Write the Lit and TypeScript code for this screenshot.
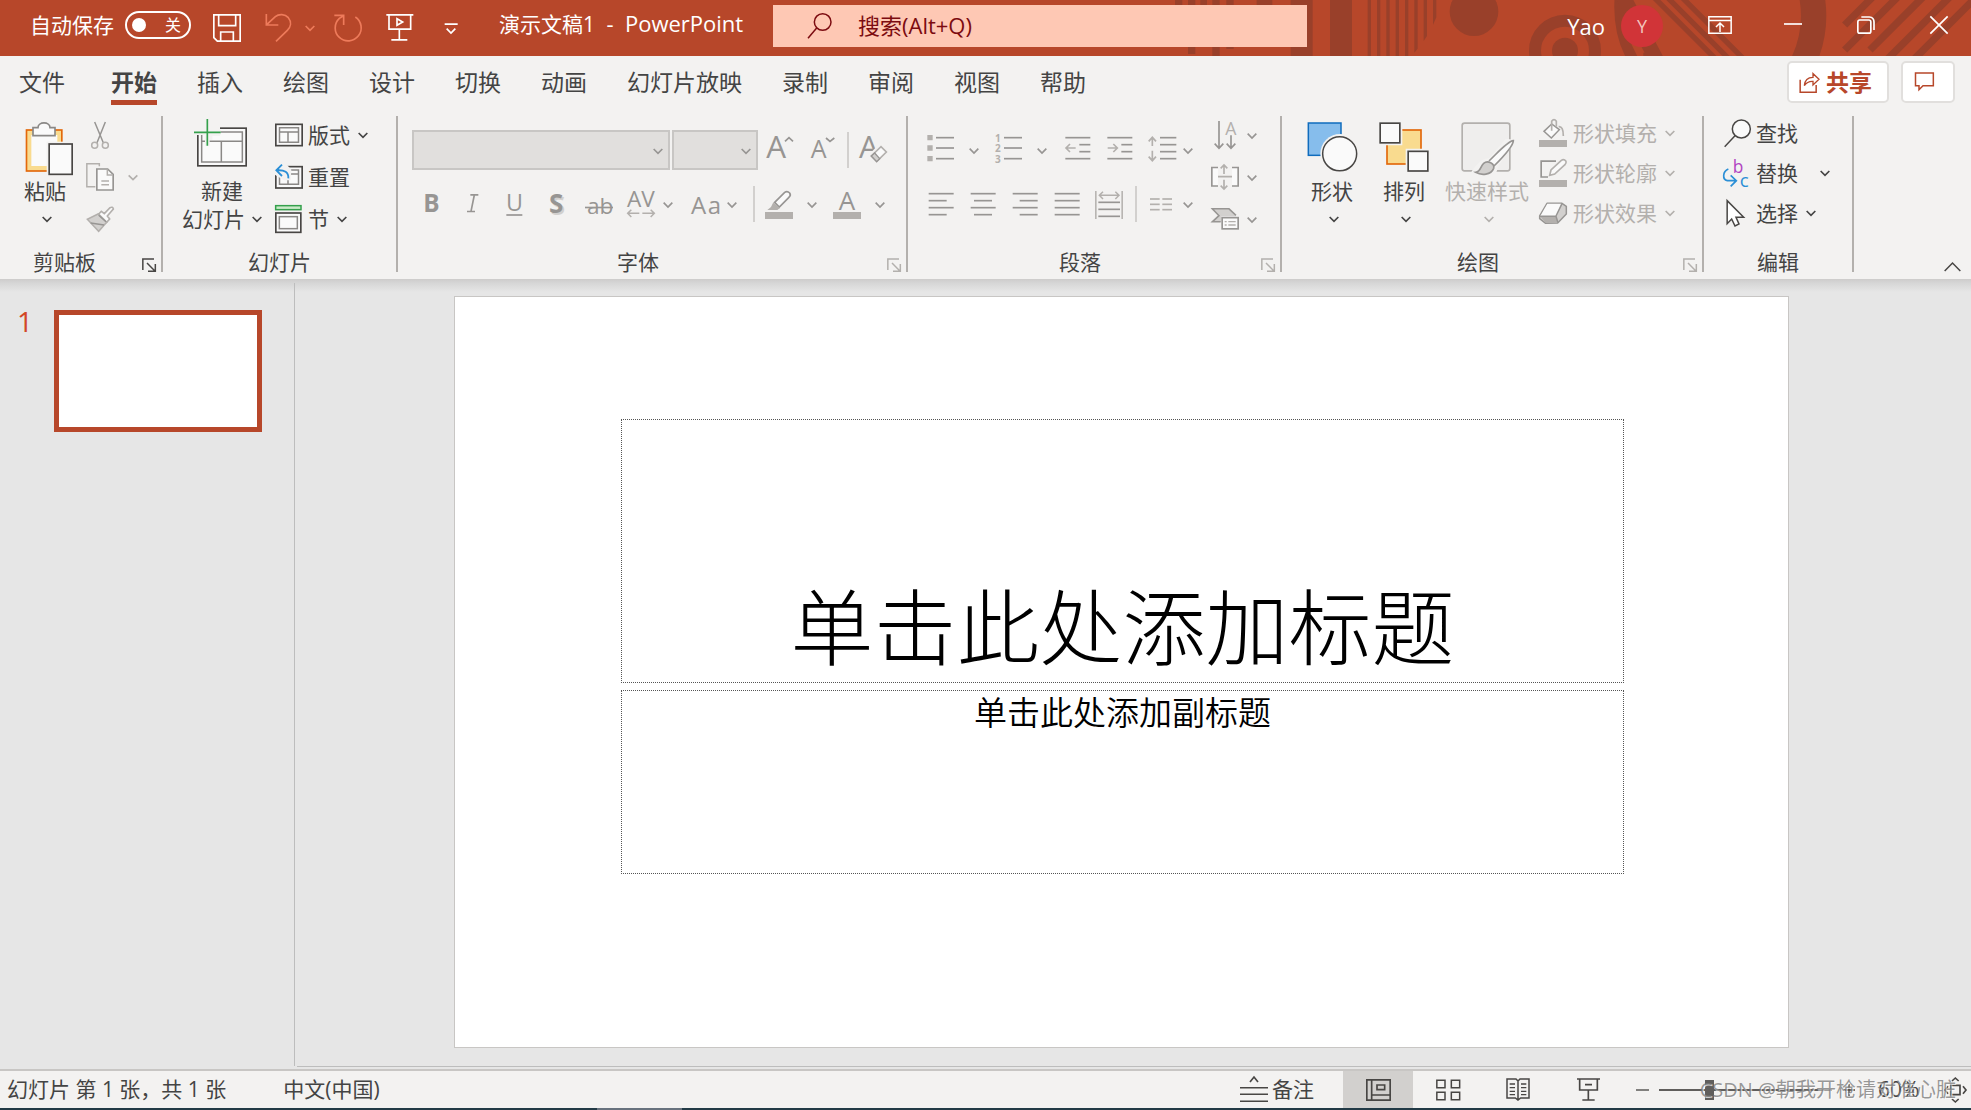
import { LitElement, html, css, svg, nothing } from "lit";
import type { TemplateResult } from "lit";
import { customElement, state } from "lit/decorators.js";

type Art = TemplateResult;

/* Icon art is drawn on a grid three times finer than the displayed pixels. */
const icon = (x: number, y: number, w: number, h: number, body: unknown) => html`<svg
  class="ic" aria-hidden="true" width=${w / 3} height=${h / 3} viewBox="${x} ${y} ${w} ${h}" fill="none">${body}</svg>`;

const chevron = (dy = 0, h = 36) => icon(-15, -h / 2 - dy, 30, h,
  svg`<path d="M-13 -6L0 7L13 -6" stroke="currentColor" stroke-width="5"/>`);

const glyph = (x: number, y: number, size: number, text: string, extra = "") =>
  svg`<text class=${"glyph " + extra} x=${x} y=${y} font-size=${size}>${text}</text>`;

const G = "#979593"; // disabled stroke, dark
const L = "#b3b0ad"; // disabled stroke, light
const D = "#484644"; // enabled stroke
const BG = "#f3f2f1";

const lines = (rows: [number, number, number][], color = G) =>
  svg`${rows.map(([x1, x2, y]) => svg`<path d="M${x1} ${y}H${x2}" stroke=${color} stroke-width="5"/>`)}`;

const icons = {
  save: () => icon(639, 42, 84, 84, svg`<path d="M641.500 44.500H720.500V123.500H652L641.500 113Z M656 46V77H707V46 M662 122V96H700V122" stroke="#fff" stroke-width="5"/>`),
  undo: () => icon(796, 42, 84, 84, svg`<path d="M800 42V75H836 M801 74L827 50C838 41 856 42 866 53C877 66 873 81 863 91L829 124" stroke="#ee7b5b" stroke-width="5"/>`),
  redo: () => icon(1002, 42, 84, 84, svg`<path d="M1003 46H1031V75 M1031 47L1018 55A39 39 0 1 0 1066 51" stroke="#ee7b5b" stroke-width="5"/>`),
  present: () => icon(1157, 42, 84, 84, svg`<path d="M1158 44.500H1239 M1166 45V87.500H1231V45 M1197 88V118 M1173 119.500H1221" stroke="#fff" stroke-width="5"/><path d="M1190 56V76L1207 66Z" stroke="#fff" stroke-width="5"/>`),
  customize: () => icon(1333, 54, 42, 48, svg`<path d="M1335 66.500H1374 M1341 80L1354 93L1367 80" stroke="#fff" stroke-width="5"/>`),
  searchTitle: () => icon(1072, 36, 78, 84, svg`<circle cx="1119" cy="66" r="25" stroke="#7c0b10" stroke-width="4.500"/><path d="M1101 84L1075 115" stroke="#7c0b10" stroke-width="4.500"/>`),
  ribbonMode: () => icon(771, 48, 72, 54, svg`<path d="M773.500 50.500H840.500V99.500H773.500Z M773 61.500H841 M807 96V70 M795 81L807 69L819 81" stroke="#fff" stroke-width="4.500"/>`),
  minimize: () => icon(1002, 48, 54, 54, svg`<path d="M1002 72H1056" stroke="#fff" stroke-width="5"/>`),
  restore: () => icon(1220, 48, 54, 54, svg`<rect x="1222.500" y="60" width="39" height="39.500" rx="6" stroke="#fff" stroke-width="5"/><path d="M1233 51H1257Q1271 52 1271 66V90" stroke="#fff" stroke-width="5"/>`),
  close: () => icon(1440, 48, 54, 54, svg`<path d="M1441 49L1493 101M1493 49L1441 101" stroke="#fff" stroke-width="5"/>`),
  share: () => icon(1048, 210, 63, 69, svg`<path d="M1051.500 236V273.500H1099.500V252" stroke="#b7472a" stroke-width="4.500"/><path d="M1064 254Q1066 229 1090 229V218L1108 235L1090 252V241Q1073 240 1064 254Z" stroke="#b7472a" stroke-width="4"/>`),
  comment: () => icon(1392, 212, 63, 63, svg`<path d="M1396.500 218H1450V256H1419L1407 268V256H1396.500Z" stroke="#b7472a" stroke-width="4.500"/>`),

  paste: () => icon(45, 18, 180, 180, svg`<rect x="79.500" y="60" width="106" height="123" fill="#f9db8f" stroke="#e3690b" stroke-width="5"/><rect x="94" y="75" width="78" height="93" fill="#fafafa"/><path d="M99 77V53H114C114 34 150 34 150 53H165V77Z" fill="#fafafa" stroke="#8a8886" stroke-width="5"/><rect x="140" y="95" width="84" height="103" fill=${BG}/><rect x="147.500" y="102" width="69" height="91" fill="#fafafa" stroke=${D} stroke-width="5"/>`),
  cut: () => icon(258, 33, 84, 84, svg`<path d="M284 36L310 98M316 36L291 98" stroke=${G} stroke-width="4.500"/><circle cx="284" cy="106" r="9" stroke=${L} stroke-width="4.500"/><circle cx="316" cy="106" r="9" stroke=${L} stroke-width="4.500"/>`),
  copy: () => icon(258, 159, 84, 84, svg`<path d="M298 169V161H260.500V230H286" stroke=${L} stroke-width="4.500"/><path d="M290.500 177H323L339.500 193V240H290.500Z" fill="#fafafa" stroke=${G} stroke-width="5"/><path d="M322 178V195H339 M304 213H327M304 224H327" stroke=${L} stroke-width="4.500"/>`),
  brush: () => icon(258, 282, 84, 84, svg`<path d="M296 309L304 301L313 308L330 290Q338 286 340 294L322 315L329 324L320 334L294 308Z" fill="#fafafa" stroke=${L} stroke-width="5"/><path d="M294 309L262 325L296 361L320 334Z" fill="#d2d0ce" stroke=${L} stroke-width="4.500"/><path d="M272 336L312 342M296 313L318 332" stroke=${G} stroke-width="4"/>`),
  newSlide: () => icon(579, 18, 180, 180, svg`<rect x="596.500" y="54.500" width="145" height="113" fill="#fafafa" stroke=${D} stroke-width="5"/><rect x="608" y="66" width="122" height="90" stroke="#8a8886" stroke-width="4.500"/><path d="M608 94H730M667 94V156" stroke="#8a8886" stroke-width="4.500"/><path d="M590 48H663V78H640V90H617V75H590Z" fill=${BG}/><path d="M625 27V107M585 67H665" stroke=${BG} stroke-width="14"/><path d="M625 27V107M585 67H665" stroke="#34a04c" stroke-width="5"/>`),
  layout: () => icon(825, 33, 84, 78, svg`<rect x="827.500" y="40" width="79" height="64" fill="#fafafa" stroke=${D} stroke-width="5"/><path d="M838.500 50.500H895.500V93.500H838.500ZM838 63H896M864 63V93" stroke="#8a8886" stroke-width="4.500"/>`),
  reset: () => icon(825, 159, 84, 78, svg`<rect x="827.500" y="167" width="79" height="64" fill="#fafafa" stroke=${D} stroke-width="5"/><path d="M838.500 177H895.500V219.500H838.500ZM862 189H896M864 202V219" stroke="#8a8886" stroke-width="4.500"/><path d="M822 158H858L874 176L872 208H852L822 190Z" fill=${BG}/><path d="M846 161L829 178L846 195M830 178C854 176 866 184 865 202" stroke="#2b8fd6" stroke-width="5.500"/>`),
  section: () => icon(825, 285, 84, 84, svg`<rect x="827" y="287" width="76" height="12" fill="#caeac8" stroke="#34a04c" stroke-width="4.500"/><rect x="827.500" y="309" width="75" height="58" fill="#fafafa" stroke=${D} stroke-width="5"/><rect x="838" y="320" width="54" height="36" stroke="#8a8886" stroke-width="4.500"/>`),
  launcher: (c: string) => icon(426, 444, 42, 42, svg`<path d="M428.500 480V447H462M441 459L464 482M466 462V483.500H444" stroke=${c} stroke-width="4.500"/>`),

  grow: () => icon(1125, 78, 84, 84, svg`${glyph(1129, 144, 94, "A")}<path d="M1185 94L1197 83L1209 94" stroke=${G} stroke-width="5"/>`),
  shrink: () => icon(1252, 78, 84, 84, svg`${glyph(1263, 144, 75, "A")}<path d="M1309 84L1321 94L1334 84" stroke=${G} stroke-width="5"/>`),
  clear: () => icon(1406, 78, 84, 84, svg`${glyph(1406, 144, 94, "A")}<path d="M1432 138L1470 98L1500 130L1470 168Z" fill=${BG}/><path d="M1443 138L1472 110L1488 126L1459 155Z" fill="#fafafa" stroke=${L} stroke-width="5"/><path d="M1443 138L1453 129L1468 146L1459 155Z" fill="#d2d0ce" stroke=${G} stroke-width="4"/>`),
  bold: () => icon(84, 240, 84, 84, glyph(103, 305, 73, "B", "bold")),
  italic: () => icon(208, 240, 84, 84, svg`<path d="M242 254.500H266M232 304.500H256M254 255L244 304" stroke=${G} stroke-width="5"/>`),
  underline: () => icon(332, 240, 84, 84, svg`${glyph(347, 304, 70, "U")}<path d="M348 315H396" stroke=${G} stroke-width="5"/>`),
  shadow: () => icon(459, 240, 84, 84, svg`${glyph(482, 316, 78, "S", "bold pale")}${glyph(477, 310, 78, "S", "bold")}`),
  strike: () => icon(585, 240, 84, 84, svg`${glyph(591, 312, 68, "ab")}<path d="M585 292.500H669" stroke=${G} stroke-width="5"/>`),
  spacing: () => icon(711, 240, 84, 84, svg`${glyph(711, 291, 68, "AV")}<path d="M748 310H713M724 299L713 310L724 321M757 310H793M782 299L793 310L782 321" stroke=${L} stroke-width="4.500"/>`),
  changeCase: () => icon(905, 240, 84, 84, svg`${glyph(905, 312, 72, "A")}${glyph(955, 312, 72, "a")}`),
  highlight: () => icon(1125, 240, 84, 87, svg`<rect x="1125" y="306" width="84" height="21" fill=${L}/><path d="M1154 277L1184 247Q1192 242 1199 249Q1204 256 1196 263L1168 291Z" fill="#fafafa" stroke=${G} stroke-width="5"/><path d="M1150 277L1170 294L1162 300H1132L1143 291Z" fill=${L}/>`),
  fontColor: () => icon(1329, 240, 84, 87, svg`<rect x="1329" y="306" width="84" height="21" fill=${L}/>${glyph(1346, 299, 78, "A")}`),

  bullets: () => icon(80, 78, 84, 84, svg`<path d="M81 75H97V91H81ZM81 106H97V122H81ZM81 138H97V154H81Z" fill=${L}/>${lines([[107, 161, 83], [107, 161, 114], [107, 161, 146]])}`),
  numbers: () => icon(284, 72, 84, 96, svg`${glyph(284, 95, 30, "1", "bold light")}${glyph(284, 127, 30, "2", "bold light")}${glyph(284, 158, 30, "3", "bold light")}${lines([[311, 365, 83], [311, 365, 114], [311, 365, 146]])}`),
  outdent: () => icon(490, 78, 84, 84, svg`${lines([[497, 572, 83], [539, 572, 104], [539, 572, 125], [497, 572, 146]])}<path d="M528 114H500M511 102L499 114L511 126" stroke=${L} stroke-width="5"/>`),
  indent: () => icon(616, 78, 84, 84, svg`${lines([[623, 698, 83], [665, 698, 104], [665, 698, 125], [623, 698, 146]])}<path d="M624 114H652M641 102L653 114L641 126" stroke=${L} stroke-width="5"/>`),
  leading: () => icon(744, 78, 84, 84, svg`${lines([[783, 832, 83], [783, 832, 104], [783, 832, 125], [783, 832, 146]])}<path d="M760 83V108M749 94L760 82L771 94M760 122V150M749 140L760 152L771 140" stroke=${L} stroke-width="5"/>`),
  left: () => icon(81, 240, 84, 84, lines([[86, 161, 251], [86, 140, 272], [86, 161, 293], [86, 140, 314]])),
  center: () => icon(207, 240, 84, 84, lines([[212, 287, 251], [222, 276, 272], [212, 287, 293], [222, 276, 314]])),
  right: () => icon(333, 240, 84, 84, lines([[338, 413, 251], [359, 413, 272], [338, 413, 293], [359, 413, 314]])),
  justify: () => icon(459, 240, 84, 84, lines([[464, 539, 251], [464, 539, 272], [464, 539, 293], [464, 539, 314]])),
  distribute: () => icon(585, 240, 84, 87, svg`${lines([[595, 660, 277], [595, 660, 298], [595, 660, 319]])}<path d="M587.500 243V327M666.500 243V327M599 256H656M609 245L598 256L609 267M646 245L657 256L646 267" stroke=${L} stroke-width="4.500"/>`),
  columns: () => icon(741, 240, 84, 84, lines([[750, 779, 267], [750, 779, 283], [750, 779, 299], [787, 816, 267], [787, 816, 283], [787, 816, 299]], L)),
  direction: () => icon(933, 33, 84, 84, svg`<path d="M957 33V112M944 101L957 115L970 101M993 76V112M980 101L993 115L1006 101" stroke=${G} stroke-width="5"/>${glyph(976, 74, 53, "A", "light")}`),
  valign: () => icon(933, 157, 84, 84, svg`<path d="M954 170.500H935.500V226H954M996 170.500H1014.500V226H996" fill="#fafafa" stroke=${G} stroke-width="5"/><path d="M954 198H996M972 190V164M962 173L972 163L982 173M972 207V234M962 225L972 235L982 225" stroke=${L} stroke-width="5"/>`),
  smartArt: () => icon(933, 285, 84, 84, svg`<path d="M933 296.500H987L1008 319H964V336H933L955 316Z" fill="#d2d0ce"/><path d="M1008 316L987 296.500H937L957 317L937 335.500H962" stroke=${G} stroke-width="4.500"/><rect x="966.500" y="323" width="48" height="33.500" fill="#fafafa" stroke=${G} stroke-width="5"/><path d="M974 335H980M985 335H1007M974 345H980M985 345H1007" stroke=${L} stroke-width="4"/>`),

  shapes: () => icon(64, 18, 180, 180, svg`<rect x="83" y="39" width="98" height="97" fill="#86bdec" stroke="#0f6cbd" stroke-width="4.500"/><circle cx="178" cy="131" r="59" fill=${BG}/><circle cx="177" cy="131.500" r="51" fill="#fafafa" stroke=${D} stroke-width="4.500"/>`),
  arrange: () => icon(282, 18, 180, 180, svg`<rect x="321" y="60" width="102" height="102" fill="#f9db8f" stroke="#e3690b" stroke-width="5"/><path d="M292 32H367V106H292ZM377 116H452V190H377Z" fill=${BG}/><rect x="300.500" y="39.500" width="59" height="59" fill="#fafafa" stroke=${D} stroke-width="5"/><rect x="384.500" y="124" width="59" height="59" fill="#fafafa" stroke=${D} stroke-width="5"/>`),
  quickStyle: () => icon(534, 18, 180, 180, svg`<rect x="549.500" y="39.500" width="143" height="143" rx="7" fill="#efeeed" stroke=${L} stroke-width="5"/><path d="M575 190Q600 145 630 145L680 86L712 90L660 165L648 198H585Z" fill=${BG}/><path d="M630 153C660 124 686 94 703 92C703 108 675 138 645 168" fill="#fafafa" stroke=${G} stroke-width="5"/><path d="M590 187C606 185 604 168 614 160C626 150 648 160 644 175C636 195 608 197 590 187Z" fill="#d2d0ce" stroke=${G} stroke-width="5"/>`),
  fill: () => icon(780, 27, 84, 84, svg`<rect x="777" y="90" width="84" height="21" fill=${L}/><path d="M815 42L792 64L814 84L838 59Z" fill="#fafafa" stroke=${G} stroke-width="4.500"/><path d="M815 62V34Q822 24 829 34V50M836 50Q850 48 850 78" stroke=${L} stroke-width="5"/>`),
  outline: () => icon(780, 147, 84, 84, svg`<rect x="777" y="210" width="84" height="21" fill=${L}/><path d="M828 153.500H783.500V201H804" stroke=${G} stroke-width="5"/><path d="M809 196L813 180L844 151Q852 146 858 154Q860 160 854 165L824 192Z" fill="#fafafa" stroke=${L} stroke-width="5"/>`),
  effects: () => icon(780, 267, 84, 84, svg`<path d="M779 318L801 280H846L859 289V312L833 339L797 340L779 326Z" fill="#d2d0ce" stroke=${G} stroke-width="4.500" stroke-linejoin="round"/><path d="M781 318L802 281H844L828 318Z" fill="#fafafa"/><path d="M780 319H828L834 338L798 339Z" fill="#b3b0ad"/><path d="M779 319H828L834 338M828 318L846 281" stroke=${G} stroke-width="4.500"/>`),
  find: () => icon(129, 25, 84, 84, svg`<circle cx="184" cy="55" r="27" fill="#fafafa" stroke=${D} stroke-width="4.500"/><path d="M165 75L134 108" stroke=${D} stroke-width="4.500"/>`),
  replace: () => icon(129, 147, 84, 84, svg`<text class="glyph violet" x="158" y="188" font-size="52">b</text><text class="glyph blue" x="179" y="230" font-size="56">c</text><path d="M145 177C128 184 126 208 142 212H169M152 196L169 212L152 229" stroke="#2b8fd6" stroke-width="5"/>`),
  select: () => icon(129, 267, 84, 84, svg`<path d="M141.500 272V341L155 327L165 348L177 342L168 322H191Z" fill="#fff" stroke=${D} stroke-width="4.500"/>`),
  collapse: () => icon(792, 456, 51, 33, svg`<path d="M794 486L817.500 462L841 486" stroke=${D} stroke-width="4.500"/>`),

  notes: () => icon(0, 0, 84, 81, svg`<path d="M0 35H84M0 55H84M0 76H84" stroke=${D} stroke-width="4.500"/><path d="M30 18L42 3L54 18" stroke=${D} stroke-width="5"/>`),
  normal: () => icon(0, 0, 75, 66, svg`<path d="M2.500 2.500H72.500V63.500H2.500ZM17 3V63M17 48H72M33 18H56V32H33Z" stroke=${D} stroke-width="5"/>`),
  sorter: () => icon(0, 0, 75, 66, svg`<path d="M2.500 4H27V26H2.500ZM46 4H71V26H46ZM2.500 40H27V62H2.500ZM46 40H71V62H46Z" stroke=${D} stroke-width="4.500"/>`),
  reading: () => icon(0, 0, 72, 69, svg`<path d="M3 3H30L36 9L42 3H69V60H44L36 66L28 60H3ZM36 9V64" stroke=${D} stroke-width="4.500"/><path d="M11 18H27M11 29H27M11 40H27M11 50H27M45 18H61M45 29H61M45 40H61M45 50H61" stroke=${D} stroke-width="4"/>`),
  slideshow: () => icon(0, 0, 69, 69, svg`<path d="M0 3H69M8 3V36H61V3M34 37V65M16 66H53M24 20H45" stroke=${D} stroke-width="5"/>`),
  fit: () => icon(0, 0, 69, 78, svg`<path d="M21 25H48V53H21ZM24 12L34 3L44 12M24 66L34 75L44 66M12 28L3 39L12 50M57 28L66 39L57 50" stroke=${D} stroke-width="5"/>`),
};

const P = "#99402a";
const titlePattern = svg`
  <g fill=${P}>
    <path d="M675 0H697V15H675ZM714 0H736V162H714ZM751 0H771V15H751ZM787 0H809V168H787ZM829 0H851V147H829Z"/>
    <path d="M920 0H967V15H920ZM1022 0H1088V168H1022ZM1140 0H1206V168H1140Z"/>
    <path d="M1253 0H1263V168H1253ZM1281 0H1291V168H1281ZM1309 0H1319V168H1309ZM1337 0H1347V168H1337ZM1365 0H1375V168H1365Z"/>
    <path d="M1393 0H1403V146L1393 158ZM1421 0H1431V108L1421 123ZM1449 0H1459V52L1449 75Z"/>
    <circle cx="1572" cy="35" r="73"/>
    <circle cx="1845" cy="152" r="39"/>
  </g>
  <g fill="none" stroke=${P}>
    <circle cx="1845" cy="152" r="90" stroke-width="36"/>
    <path d="M2010 -10Q2002 100 2050 180" stroke-width="32"/>
    <path d="M2020 -10L2120 180L2080 180" stroke-width="44"/>
    <path d="M2100 -20L2300 180M2140 -20L2340 180M2184 -20L2384 180" stroke-width="16"/>
    <path d="M2584 -20Q2606 90 2558 190" stroke-width="76"/>
    <path d="M2684 75L2784 -25M2684 150L2859 -25M2760 150L2935 -25M2800 190L3015 -25M2880 190L3090 -20" stroke-width="22"/>
  </g>`;

const TABS = ["文件", "开始", "插入", "绘图", "设计", "切换", "动画", "幻灯片放映", "录制", "审阅", "视图", "帮助"];

@customElement("app-root")
export class AppRoot extends LitElement {
  @state() private tab = "开始";
  @state() private view = "普通视图";

  static styles = css`
    :host {
      display: flex; flex-direction: column; height: 100vh; overflow: hidden; position: relative;
      background: #e6e6e6; color: #444;
      font: 21px/28px "Open Sans", "Noto Sans CJK SC", sans-serif;
    }
    * { box-sizing: border-box; }
    button, input, select { font: inherit; color: inherit; background: none; border: 0; padding: 0; margin: 0; border-radius: 0; }
    button { display: flex; align-items: center; white-space: nowrap; }
    .ic { display: block; flex: none; overflow: visible; }
    .glyph { fill: #979593; font-family: "Open Sans", sans-serif; }
    .glyph.bold { font-weight: 700; }
    .glyph.pale { fill: #d2d0ce; }
    .glyph.light { fill: #b3b0ad; }
    .glyph.violet { fill: #b146c2; }
    .glyph.blue { fill: #2b8fd6; }

    .titlebar { position: relative; display: flex; align-items: center; height: 56px; flex: none; background: #b7472a; color: #fff; }
    .pattern { position: absolute; right: 0; top: 0; }
    .quick { position: relative; display: flex; align-items: center; width: 499px; padding: 0 0 6px 30px; height: 56px; }
    .autosave { display: flex; align-items: center; gap: 11px; margin-right: 22px; }
    .pill { display: flex; align-items: center; justify-content: space-between; width: 66px; height: 28px; border: 2px solid #fff; border-radius: 14px; padding: 0 8px 0 5px; font-size: 16px; line-height: 24px; }
    .pill input { appearance: none; width: 14px; height: 14px; border-radius: 7px; background: #fff; }
    .quick button { margin-top: 6px; }
    .save { margin-right: 24px; }
    .undo { gap: 12px; color: #ee7b5b; margin-right: 19px; }
    .redo, .present { margin-right: 24px; }
    .customize { margin-left: 6px; }
    .doc { position: relative; width: 274px; white-space: pre; padding-bottom: 10px; }
    .latin { font-size: 22px; }
    .search { position: relative; display: flex; align-items: center; flex: 0 1 534px; height: 42px; margin-bottom: 4px; padding-left: 34px; gap: 25px; background: #fec8b4; }
    .search input { flex: 1; min-width: 0; height: 36px; margin-bottom: 2px; outline: 0; color: #7c0b10; font-size: 22px; }
    .search input::placeholder { color: #7c0b10; opacity: 1; }
    .account { position: relative; display: flex; align-items: center; gap: 16px; margin: 0 25px 4px auto; font-size: 22px; }
    .avatar { width: 42px; height: 42px; border-radius: 21px; background: #d13438; display: grid; place-items: center; font-size: 18px; color: #f3c4bd; }
    .window { position: relative; display: flex; gap: 9px; margin-bottom: 6px; }
    .window button { width: 64px; height: 42px; justify-content: center; }

    .tabs { display: flex; flex: none; height: 54px; background: #f3f2f1; font-size: 23px; padding-right: 16px; }
    .tab { height: 49px; padding: 0 20px; color: #444; text-decoration: none; line-height: 53px; white-space: nowrap; }
    .tab:first-child { padding: 0 26px 0 19px; }
    .tab.on { font-weight: 700; padding: 0; margin: 0 20px; border-bottom: 5px solid #b7472a; }
    .tabtools { display: flex; gap: 12px; margin: 5px 0 0 auto; }
    .tabtools button { height: 42px; border: 2px solid #e1dfdd; border-radius: 5px; background: #fff; color: #b7472a; font-weight: 700; }
    .share { width: 102px; padding-left: 10px; gap: 6px; }
    .comment { width: 54px; padding-left: 11px; padding-bottom: 2px; }

    .ribbon { display: flex; flex: none; background: #f3f2f1; padding: 6px 10px 7px 0; }
    .group { display: flex; flex-direction: column; flex: none; height: 156px; border-right: 2px solid #b3b0ad; }
    .body { display: flex; height: 134px; }
    .foot { display: flex; height: 22px; line-height: 24px; align-items: flex-start; }
    .foot span { flex: 1; text-align: center; }
    .foot button { width: 28px; height: 22px; padding-left: 9px; align-items: flex-end; }
    .clipboard { width: 163px; }
    .clipboard .body { padding-left: 12px; gap: 8px; }
    .clipboard .foot span { padding-right: 4px; }
    .slides { width: 235px; }
    .slides .body { padding-left: 15px; gap: 9px; }
    .font { width: 510px; }
    .paragraph { width: 374px; }
    .font .body, .paragraph .body { padding-left: 12px; }
    .drawing { width: 422px; }
    .drawing .body { padding-left: 14px; }
    .editing { width: 150px; }
    .editing .body { padding-left: 19px; }
    .big { flex-direction: column; width: 66px; line-height: 30px; }
    .big.mid { width: 72px; }
    .big.wide { width: 88px; }
    .big.wider { width: 94px; }
    .line2 { display: flex; align-items: center; height: 26px; gap: 7px; }
    .line2.bare { padding-left: 4px; }
    .off { color: #b3b0ad; }
    .stack { display: flex; flex-direction: column; gap: 4px; }
    .stack button { height: 38px; }
    .stack.tight button { height: 36px; padding-bottom: 2px; }
    .stack.shapefmt { padding-left: 6px; }
    .label { padding-left: 5px; }
    .stack .spread { gap: 14px; }
    .near { padding-left: 8px; }
    .far { padding-left: 22px; }
    .rows { display: flex; flex-direction: column; gap: 14px; padding-top: 14px; }
    .row { display: flex; height: 40px; color: #979593; }
    .paragraph .rows { width: 284px; }
    .cell { width: 42px; height: 40px; justify-content: center; }
    .split { height: 40px; width: 64px; padding-left: 7px; gap: 8px; }
    .split.long { width: 68px; gap: 14px; }
    .stack .split { height: 38px; color: #979593; }
    .rule { width: 2px; height: 36px; margin: 2px 3px 2px 5px; background: #d2d0ce; }
    .combos { display: flex; gap: 2px; padding-left: 2px; }
    .combo { position: relative; display: block; width: 258px; }
    .combo.size { width: 86px; }
    .combo select { appearance: none; width: 100%; height: 40px; background: #e1dfdd; border: 2px solid #c8c6c4; opacity: 1; }
    .combo .ic { position: absolute; right: 7px; top: 16px; }
    .collapse { margin-left: auto; align-self: flex-end; }

    .main { display: flex; flex: 1; min-height: 0; background: linear-gradient(#cdcccb, #d6d6d6 4px, #e6e6e6 13px); }
    .panel { width: 295px; flex: none; margin: 4px 0 3px; border-right: 1px solid #bdbdbd; padding: 27px 32px 0 17px; display: flex; align-items: flex-start; color: #d24726; font-size: 28px; line-height: 22px; }
    .panel span { width: 37px; }
    .thumb { flex: 1; aspect-ratio: 208 / 122; background: #fff; border: 5px solid #b7472a; }
    .editor { flex: 1; min-width: 0; margin: 0 0 2px 2px; padding: 17px 25px 18px 0; border-bottom: 1px solid #bdbdbd; display: flex; justify-content: center; }
    .slide { height: 100%; aspect-ratio: 1335 / 752; background: #fff; border: 1px solid #c8c6c4; color: #000; display: grid;
      grid-template-columns: minmax(0, 166fr) minmax(0, 1004fr) minmax(0, 164fr);
      grid-template-rows: minmax(0, 122fr) minmax(0, 264fr) minmax(0, 7fr) minmax(0, 184fr) minmax(0, 173fr); }
    .holder { grid-column: 2; border: 1px dotted #555; text-align: center; margin: 0; display: flex; justify-content: center; }
    .heading { grid-row: 2; align-items: flex-end; padding-bottom: 5px; font-size: 83px; line-height: 108px; font-weight: 300; font-family: "Noto Sans CJK SC Light", "Noto Sans CJK SC", sans-serif; }
    .sub { grid-row: 4; font-size: 33px; line-height: 44px; font-weight: 350; }

    .status { position: relative; display: flex; align-items: center; flex: none; height: 39px; background: #f3f2f1; border-top: 2px solid #c8c6c4; padding: 0 4px 0 7px; line-height: 26px; }
    .status > span, .notes span { padding-bottom: 2px; }
    .lang { margin-left: 57px; }
    .notes { margin-left: auto; gap: 4px; margin-right: 29px; }
    .view { width: 70px; height: 37px; justify-content: center; }
    .view.on { background: #d2d0ce; }
    .step { width: 14px; justify-content: center; line-height: 36px; }
    .minus { margin-left: 12px; }
    .zoom { appearance: none; width: 173px; height: 20px; margin: 0 10px;
      background: linear-gradient(#605e5c, #605e5c) center / 100% 2px no-repeat; }
    .zoom::-webkit-slider-thumb { appearance: none; width: 9px; height: 20px; background: #605e5c; }
    .percent { width: 44px; margin: 0 22px 0 22px; }
    .watermark { position: absolute; right: 15px; top: 6px; font-size: 20px; color: rgba(120, 120, 120, 0.75); white-space: nowrap; pointer-events: none; text-shadow: 1px 1px 0 rgba(255, 255, 255, 0.7); }
    .taskbar { flex: none; height: 2px; background: #223a46; display: flex; }
    .taskbar i { width: 85px; margin-left: 597px; background: #68727e; }
  `;

  private cell(art: Art, label: string) {
    return html`<button class="cell" aria-label=${label}>${art}</button>`;
  }

  private split(art: Art, label: string, long = false, dy = 2) {
    return html`<button class=${long ? "split long" : "split"} aria-label=${label}>${art}${chevron(dy)}</button>`;
  }

  private item(art: Art, label: string, arrow: "" | "near" | "far" = "near", off = false) {
    return html`<button class=${off ? "off" : ""}>${art}<span class="label">${label}</span>${arrow
      ? html`<span class=${arrow}>${chevron(0)}</span>` : nothing}</button>`;
  }

  private big(art: Art, label: string, size: string, off = false) {
    return html`<button class="big ${size} ${off ? "off" : ""}">${art}<span>${label}</span>
      <span class="line2 bare">${chevron(0)}</span></button>`;
  }

  private foot(label: string, color?: string) {
    return html`<div class="foot"><span>${label}</span>${color
      ? html`<button aria-label=${label + "设置"}>${icons.launcher(color)}</button>` : nothing}</div>`;
  }

  private titlebar() {
    return html`<header class="titlebar">
      <svg class="pattern" aria-hidden="true" width="796" height="56" viewBox="675 0 2388 168">${titlePattern}</svg>
      <div class="quick">
        <label class="autosave">自动保存
          <span class="pill"><input type="checkbox" role="switch" />关</span>
        </label>
        <button class="save" aria-label="保存">${icons.save()}</button>
        <button class="undo" aria-label="撤消">${icons.undo()}${chevron(0)}</button>
        <button class="redo" aria-label="重复">${icons.redo()}</button>
        <button class="present" aria-label="从头开始">${icons.present()}</button>
        <button class="customize" aria-label="自定义快速访问工具栏">${icons.customize()}</button>
      </div>
      <div class="doc">演示文稿1<span class="latin">  -  PowerPoint</span></div>
      <label class="search">${icons.searchTitle()}<input type="text" aria-label="搜索" placeholder="搜索(Alt+Q)" /></label>
      <button class="account">Yao<span class="avatar">Y</span></button>
      <div class="window">
        <button aria-label="功能区显示选项">${icons.ribbonMode()}</button>
        <button aria-label="最小化">${icons.minimize()}</button>
        <button aria-label="还原">${icons.restore()}</button>
        <button aria-label="关闭">${icons.close()}</button>
      </div>
    </header>`;
  }

  private tabs() {
    return html`<nav class="tabs">
      ${TABS.map((t) => html`<a href="#" class=${t === this.tab ? "tab on" : "tab"}
        @click=${(e: Event) => { e.preventDefault(); this.tab = t; }}>${t}</a>`)}
      <div class="tabtools">
        <button class="share">${icons.share()}共享</button>
        <button class="comment" aria-label="批注">${icons.comment()}</button>
      </div>
    </nav>`;
  }

  private ribbon() {
    return html`<section class="ribbon">
      <div class="group clipboard">
        <div class="body">
          ${this.big(icons.paste(), "粘贴", "")}
          <div class="stack off">
            <button aria-label="剪切">${icons.cut()}</button>
            <button class="spread" aria-label="复制">${icons.copy()}${chevron(1)}</button>
            <button aria-label="格式刷">${icons.brush()}</button>
          </div>
        </div>
        ${this.foot("剪贴板", D)}
      </div>
      <div class="group slides">
        <div class="body">
          <button class="big wide">${icons.newSlide()}<span>新建</span><span class="line2">幻灯片${chevron(0)}</span></button>
          <div class="stack">
            ${this.item(icons.layout(), "版式")}
            ${this.item(icons.reset(), "重置", "")}
            ${this.item(icons.section(), "节")}
          </div>
        </div>
        ${this.foot("幻灯片")}
      </div>
      <div class="group font">
        <div class="body"><div class="rows">
          <div class="row">
            <div class="combos">
              <label class="combo"><select disabled aria-label="字体"></select>${chevron(0, 30)}</label>
              <label class="combo size"><select disabled aria-label="字号"></select>${chevron(0, 30)}</label>
            </div>
            ${this.cell(icons.grow(), "增大字号")}${this.cell(icons.shrink(), "减小字号")}
            <span class="rule"></span>${this.cell(icons.clear(), "清除格式")}
          </div>
          <div class="row">
            ${this.cell(icons.bold(), "加粗")}${this.cell(icons.italic(), "倾斜")}${this.cell(icons.underline(), "下划线")}
            ${this.cell(icons.shadow(), "阴影")}${this.cell(icons.strike(), "删除线")}
            ${this.split(icons.spacing(), "字符间距")}${this.split(icons.changeCase(), "更改大小写")}
            <span class="rule"></span>
            ${this.split(icons.highlight(), "突出显示颜色", true)}${this.split(icons.fontColor(), "字体颜色", true)}
          </div>
        </div></div>
        ${this.foot("字体", L)}
      </div>
      <div class="group paragraph">
        <div class="body">
          <div class="rows">
            <div class="row">
              ${this.split(icons.bullets(), "项目符号", true)}${this.split(icons.numbers(), "编号", true)}
              ${this.cell(icons.outdent(), "降低列表级别")}${this.cell(icons.indent(), "提高列表级别")}
              ${this.split(icons.leading(), "行距")}
            </div>
            <div class="row">
              ${this.cell(icons.left(), "左对齐")}${this.cell(icons.center(), "居中")}${this.cell(icons.right(), "右对齐")}
              ${this.cell(icons.justify(), "两端对齐")}${this.cell(icons.distribute(), "分散对齐")}
              <span class="rule"></span>${this.split(icons.columns(), "分栏")}
            </div>
          </div>
          <div class="stack">
            ${this.split(icons.direction(), "文字方向")}${this.split(icons.valign(), "对齐文本")}${this.split(icons.smartArt(), "转换为 SmartArt")}
          </div>
        </div>
        ${this.foot("段落", L)}
      </div>
      <div class="group drawing">
        <div class="body">
          ${this.big(icons.shapes(), "形状", "mid")}${this.big(icons.arrange(), "排列", "mid")}
          ${this.big(icons.quickStyle(), "快速样式", "wider", true)}
          <div class="stack tight shapefmt">
            ${this.item(icons.fill(), "形状填充", "near", true)}
            ${this.item(icons.outline(), "形状轮廓", "near", true)}
            ${this.item(icons.effects(), "形状效果", "near", true)}
          </div>
        </div>
        ${this.foot("绘图", L)}
      </div>
      <div class="group editing">
        <div class="body"><div class="stack tight">
          ${this.item(icons.find(), "查找", "")}
          ${this.item(icons.replace(), "替换", "far")}
          ${this.item(icons.select(), "选择")}
        </div></div>
        ${this.foot("编辑")}
      </div>
      <button class="collapse" aria-label="折叠功能区">${icons.collapse()}</button>
    </section>`;
  }

  private status() {
    const views: [string, () => Art][] = [
      ["普通视图", icons.normal], ["幻灯片浏览", icons.sorter], ["阅读视图", icons.reading], ["幻灯片放映", icons.slideshow],
    ];
    return html`<footer class="status">
      <span>幻灯片 第 1 张，共 1 张</span>
      <span class="lang">中文(中国)</span>
      <button class="notes">${icons.notes()}<span>备注</span></button>
      ${views.map(([name, art]) => html`<button class=${name === this.view ? "view on" : "view"} aria-label=${name}
        @click=${() => { this.view = name; }}>${art()}</button>`)}
      <button class="step minus" aria-label="缩小">${icon(0, 0, 39, 6, svg`<path d="M0 3H39" stroke=${D} stroke-width="4"/>`)}</button>
      <input class="zoom" type="range" aria-label="显示比例" min="10" max="187" value="60" />
      <button class="step" aria-label="放大">${icon(0, 0, 36, 36, svg`<path d="M0 18H36M18 0V36" stroke=${D} stroke-width="4"/>`)}</button>
      <span class="percent">60%</span>
      <button aria-label="适应窗口">${icons.fit()}</button>
      <span class="watermark">CSDN @朝我开枪请对准心脏</span>
    </footer>`;
  }

  render() {
    return html`
      ${this.titlebar()}
      ${this.tabs()}
      ${this.ribbon()}
      <main class="main">
        <aside class="panel"><span>1</span><div class="thumb"></div></aside>
        <div class="editor">
          <article class="slide">
            <h1 class="holder heading">单击此处添加标题</h1>
            <p class="holder sub">单击此处添加副标题</p>
          </article>
        </div>
      </main>
      ${this.status()}
      <div class="taskbar"><i></i></div>`;
  }
}
